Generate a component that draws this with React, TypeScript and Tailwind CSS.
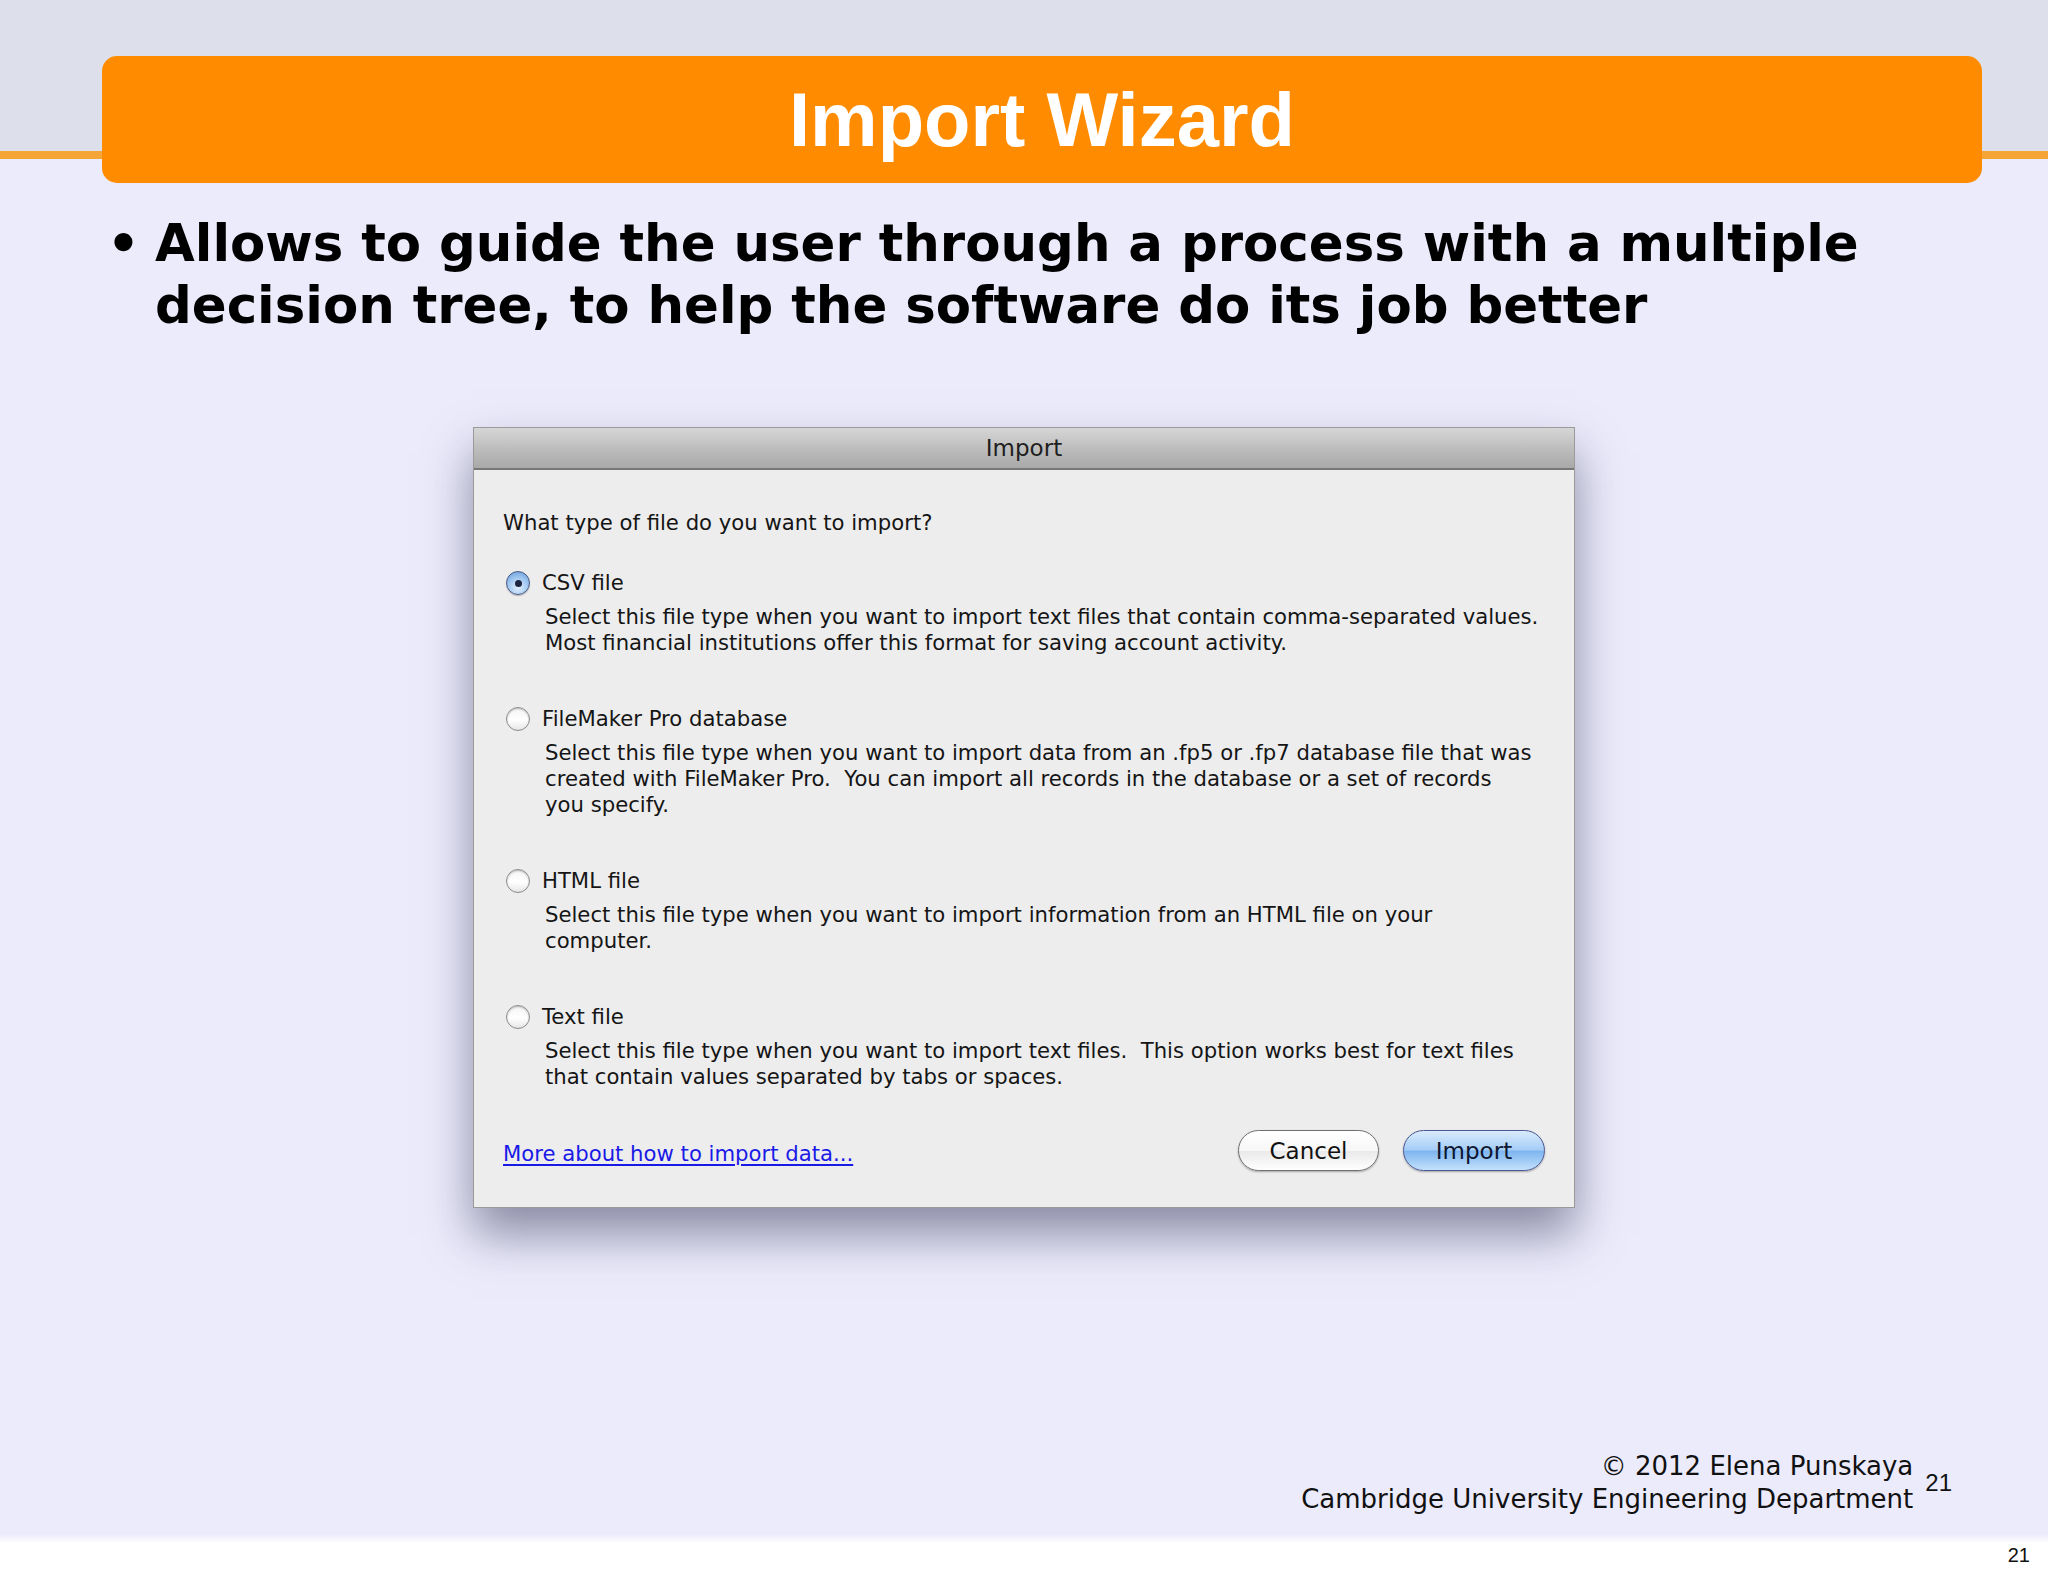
import React from "react";

const options = [
  {
    label: "CSV file",
    checked: true,
    lines: [
      "Select this file type when you want to import text files that contain comma-separated values.",
      "Most financial institutions offer this format for saving account activity.",
    ],
  },
  {
    label: "FileMaker Pro database",
    checked: false,
    lines: [
      "Select this file type when you want to import data from an .fp5 or .fp7 database file that was",
      "created with FileMaker Pro.  You can import all records in the database or a set of records",
      "you specify.",
    ],
  },
  {
    label: "HTML file",
    checked: false,
    lines: [
      "Select this file type when you want to import information from an HTML file on your",
      "computer.",
    ],
  },
  {
    label: "Text file",
    checked: false,
    lines: [
      "Select this file type when you want to import text files.  This option works best for text files",
      "that contain values separated by tabs or spaces.",
    ],
  },
];

function Radio({ checked }: { checked: boolean }) {
  if (checked) {
    return (
      <span className="ml-[3px] flex h-[24px] w-[24px] shrink-0 items-center justify-center rounded-full border border-[#4a5a82] bg-[radial-gradient(circle_at_50%_70%,#e4f0fd_0%,#a9cdf3_45%,#5f97d8_100%)] shadow-[0_1px_1px_rgba(0,0,0,0.25)]">
        <span className="h-[7px] w-[7px] rounded-full bg-[#1d2640]" />
      </span>
    );
  }
  return (
    <span className="ml-[3px] h-[24px] w-[24px] shrink-0 rounded-full border border-[#8c8c8c] bg-[linear-gradient(to_bottom,#f4f4f4,#ffffff_55%,#e6e6e6)] shadow-[inset_0_1px_2px_rgba(0,0,0,0.25)]" />
  );
}

export default function App() {
  return (
    <div className="flex h-[1576px] w-[2048px] flex-col overflow-hidden bg-[#ebebfb]">
      {/* title band */}
      <div className="bg-[linear-gradient(to_bottom,#dde0eb_0px,#dde0eb_151px,#f5a536_151px,#f5a536_159px,#ebebfb_159px)] pl-[102px] pr-[66px] pt-[56px]">
        <div className="flex h-[127px] items-center justify-center rounded-[15px] bg-[#ff8c00]">
          <h1 className="font-['Liberation_Sans',Arial,sans-serif] text-[76px] leading-none font-bold text-white">
            Import Wizard
          </h1>
        </div>
      </div>

      {/* bullet */}
      <div className="mt-[29px] flex pl-[107px] font-['DejaVu_Sans',Verdana,sans-serif] text-[51.4px] leading-[62px] font-bold text-black">
        <span className="w-[48px] shrink-0">•</span>
        <p className="whitespace-nowrap">
          Allows to guide the user through a process with a multiple
          <br />
          decision tree, to help the software do its job better
        </p>
      </div>

      {/* dialog */}
      <div className="mx-auto mt-[91px] flex w-[1102px] flex-col border border-[#9a9a9a] bg-[#ededee] font-['DejaVu_Sans',sans-serif] text-[#151515] shadow-[0_26px_44px_rgba(60,60,95,0.55)]">
        <div className="flex h-[42px] items-center justify-center border-b-2 border-[#777777] bg-[linear-gradient(to_bottom,#d6d6d6,#b9b9b9_60%,#a9a9a9)] text-[23px] text-[#1e1e1e]">
          Import
        </div>
        <div className="flex flex-col pb-[36px] pl-[29px] pr-[29px] pt-[40px] text-[21.2px] leading-[26px]">
          <p>What type of file do you want to import?</p>
          <div className="mt-[34px] flex flex-col gap-[50px]">
            {options.map((o) => (
              <div key={o.label} className="flex flex-col">
                <div className="flex items-center gap-[12px]">
                  <Radio checked={o.checked} />
                  <span>{o.label}</span>
                </div>
                <div className="mt-[8px] pl-[42px]">
                  {o.lines.map((l, i) => (
                    <p key={i} className="whitespace-pre">
                      {l}
                    </p>
                  ))}
                </div>
              </div>
            ))}
          </div>
          <div className="mt-[40px] flex h-[41px] items-center justify-between">
            <a href="#" className="mt-[6px] text-[#1a1ae6] underline underline-offset-[3px]">
              More about how to import data...
            </a>
            <div className="flex gap-[24px] text-[23px]">
              <button className="flex h-[41px] w-[141px] items-center justify-center rounded-full border-[1.5px] border-[#707070] bg-[linear-gradient(to_bottom,#ffffff,#f7f7f7_50%,#e9e9e9_51%,#ffffff)] text-[#111] shadow-[0_1px_2px_rgba(0,0,0,0.3)]">
                Cancel
              </button>
              <button className="flex h-[41px] w-[142px] items-center justify-center rounded-full border-[1.5px] border-[#4b5894] bg-[linear-gradient(to_bottom,#d9ebfd,#a6cdf6_48%,#7eb5ef_52%,#c3e1fc)] text-[#0e1630] shadow-[0_1px_2px_rgba(0,0,0,0.3)]">
                Import
              </button>
            </div>
          </div>
        </div>
      </div>

      {/* footer */}
      <div className="mt-[242px] flex justify-end pr-[96px]">
        <div className="text-right font-['DejaVu_Sans',Verdana,sans-serif] text-[26px] leading-[33px] text-[#111]">
          <p>© 2012 Elena Punskaya</p>
          <p>Cambridge University Engineering Department</p>
        </div>
        <span className="ml-[12px] mt-[21px] font-['Liberation_Sans',Arial,sans-serif] text-[24px] leading-none text-[#111]">
          21
        </span>
      </div>

      <div className="mt-auto flex h-[41px] justify-end bg-[linear-gradient(to_bottom,#eeeefb,#ffffff_8px)] pr-[18px] pt-[10px] font-['Liberation_Sans',Arial,sans-serif] text-[20px] leading-none text-[#111]">
        21
      </div>
    </div>
  );
}
